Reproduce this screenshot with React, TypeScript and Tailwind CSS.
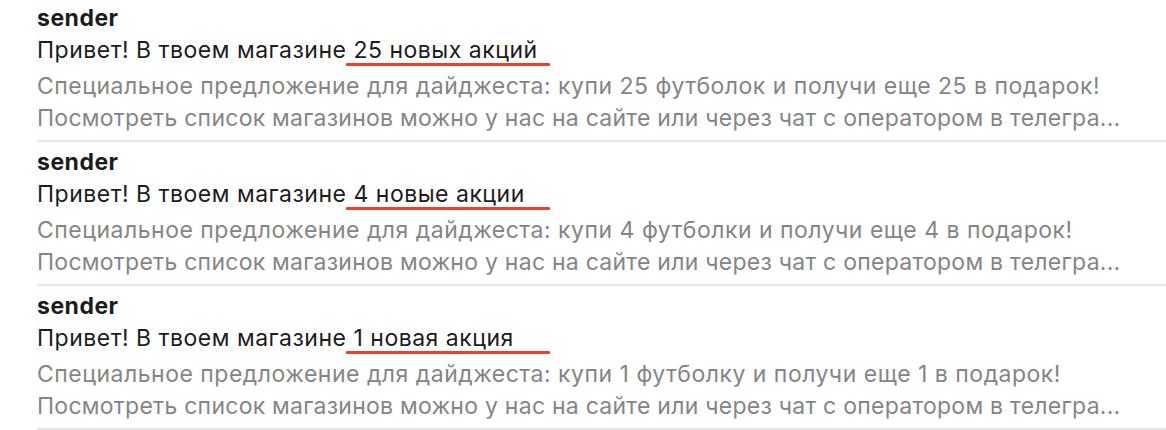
import React from 'react';

type Digest = {
  sender: string;
  count: string;
  offer: string;
};

const digests: Digest[] = [
  { sender: 'sender', count: '25 новых акций', offer: 'купи 25 футболок и получи еще 25 в подарок!' },
  { sender: 'sender', count: '4 новые акции', offer: 'купи 4 футболки и получи еще 4 в подарок!' },
  { sender: 'sender', count: '1 новая акция', offer: 'купи 1 футболку и получи еще 1 в подарок!' },
];

function DigestRow({ item }: { item: Digest }) {
  return (
    <div className="h-[144px] border-b-2 border-[#e6e6e6] pt-[5px] flex flex-col text-[23px] tracking-[0.5px]">
      <div className="leading-[30px] font-bold text-[#1c1c1e]">{item.sender}</div>
      <div className="leading-[34px] text-[#1c1c1e] whitespace-nowrap">
        Привет! В твоем магазине
        <span className="relative">
          {' '}
          {item.count}
          <span className="absolute left-0 top-[27px] w-[204px] h-[3px] bg-[#e8412c] rounded-[1px]" />
        </span>
      </div>
      <div className="mt-[3px] leading-[32px] text-[#858585] whitespace-nowrap">
        Специальное предложение для дайджеста: {item.offer}
      </div>
      <div className="leading-[32px] text-[#858585] whitespace-nowrap tracking-[0.25px]">
        Посмотреть список магазинов можно у нас на сайте или через чат с оператором в телегра...
      </div>
    </div>
  );
}

export default function App() {
  return (
    <div className="w-[1166px] h-[430px] bg-white overflow-hidden">
      <div className="-mt-[2px] pl-[37px] font-['Inter',sans-serif] antialiased">
        {digests.map((d, i) => (
          <DigestRow key={i} item={d} />
        ))}
      </div>
    </div>
  );
}
